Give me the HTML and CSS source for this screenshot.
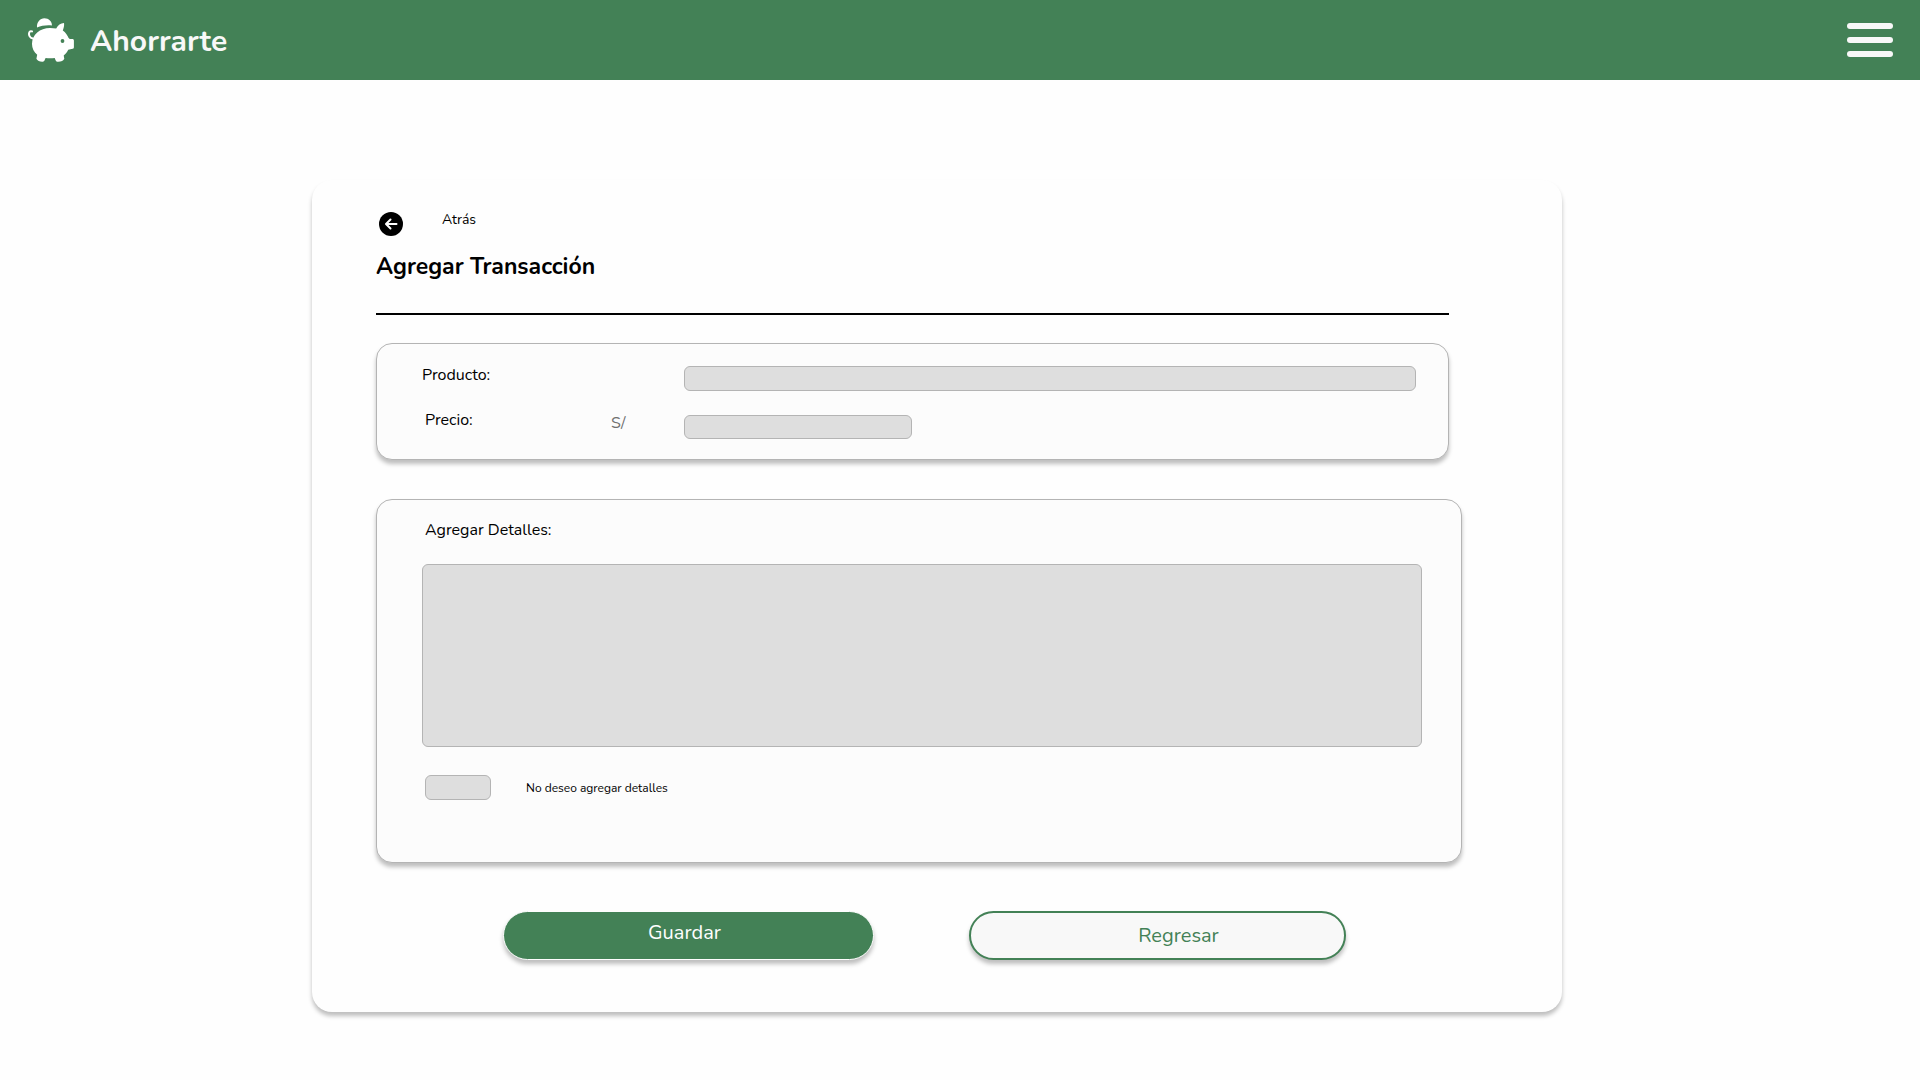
FILE: index.html
```html
<!DOCTYPE html>
<html lang="es">
<head>
<meta charset="utf-8">
<meta name="viewport" content="width=device-width, initial-scale=1">
<title>Ahorrarte - Agregar Transacción</title>
<link rel="stylesheet" href="styles.css">
</head>
<body>
<header class="topbar">
  <a class="brand" href="#">
    <svg class="brand-icon" viewBox="0 0 46 44" aria-hidden="true">
      <path class="solid" d="M9 9.500C8.600 4.400 12 .3 16.400 .3s7.800 3.500 7.500 7.200C18.500 6.900 13.500 7.700 9 9.500z"/>
      <path class="solid" d="M4 26C4 16.500 12 9.900 22 9.900c2.300 0 4.300.2 6.200.7C30 7 32.500 5.200 36 4.900c.4 2.800-.3 5.200-1.200 7.600 2.700 2 4.700 4.500 5.800 7.600l1.200.9h2.600c.9 0 1.500.6 1.500 1.500v6.700c0 .8-.5 1.400-1.300 1.600l-4.400.9c-1.100 2.300-2.600 4.200-4.500 5.700l.6 3.400c-.8 2.300-3.700 3.200-7 3-.9-.1-1.500-.7-1.900-2l-.7-1.900c-2.900.5-6.200.5-9.100 0l-.9 2.200c-.4 1-1 1.600-2.100 1.600-2.700.1-5.200-.8-6.200-3l.8-4C5.900 34 4 30.300 4 26z"/>
      <path class="tail" d="M4.800 20.500C1.500 20 .6 16.700 1.200 14.700 1.600 13.300 2.600 12.800 4 13.400"/>
      <circle class="eye" cx="34.500" cy="23" r="1.900"/>
    </svg>
    <span class="brand-name">Ahorrarte</span>
  </a>
  <button class="menu" type="button" aria-label="Menú">
    <span class="menu-bar"></span>
    <span class="menu-bar"></span>
    <span class="menu-bar"></span>
  </button>
</header>

<main class="page">
  <form class="card">
    <a class="back" href="#">
      <svg class="back-icon" viewBox="0 0 24 24" aria-hidden="true">
        <circle cx="12" cy="12" r="12"/>
        <path d="M17.500 12H7.500M11.500 7.500L7 12l4.500 4.500"/>
      </svg>
      <span class="back-text">Atrás</span>
    </a>
    <h1 class="title">Agregar Transacción</h1>
    <hr class="rule">

    <section class="panel product">
      <label class="label" for="producto">Producto:</label>
      <input class="field wide" id="producto" type="text">
      <label class="label inset" for="precio">Precio:</label>
      <span class="currency">S/</span>
      <input class="field price" id="precio" type="text">
    </section>

    <section class="panel details">
      <label class="label inset" for="detalles">Agregar Detalles:</label>
      <textarea class="field notes" id="detalles"></textarea>
      <div class="skip">
        <input class="field skip-box" id="sin-detalles" type="checkbox">
        <label class="small" for="sin-detalles">No deseo agregar detalles</label>
      </div>
    </section>

    <div class="actions">
      <button class="btn save" type="submit">Guardar</button>
      <button class="btn return" type="button">Regresar</button>
    </div>
  </form>
</main>
</body>
</html>
```
FILE: styles.css
```css
* {
  box-sizing: border-box;
}

body {
  margin: 0;
  background: #fefefe;
  color: #000;
  font-family: Nunito, Lato, sans-serif;
  font-size: 16px;
  line-height: 24px;
}

.topbar {
  display: flex;
  align-items: center;
  justify-content: space-between;
  height: 80px;
  padding: 0 27px 1px 28px;
  background: #438156;
}

.brand {
  display: flex;
  align-items: center;
  gap: 16px;
  color: #f8f8f8;
  text-decoration: none;
}

.brand-icon {
  width: 46px;
  height: 44px;
}

.solid {
  fill: #fff;
}

.tail {
  fill: none;
  stroke: #fff;
  stroke-width: 2;
  stroke-linecap: round;
}

.eye {
  fill: #438156;
}

.brand-name {
  padding-top: 4px;
  font-size: 30px;
  font-weight: 700;
  line-height: 40px;
}

.menu {
  display: flex;
  flex-direction: column;
  gap: 8px;
  width: 46px;
  padding: 0;
  border: 0;
  background: none;
}

.menu-bar {
  height: 6px;
  border-radius: 3px;
  background: #f8f8f8;
}

.page {
  padding: 100px 358px 64px 312px;
}

.card {
  padding: 28px 100px 52px 64px;
  border-radius: 20px;
  background: #fefefe;
  box-shadow: 0 4px 4px rgba(0, 0, 0, 0.25);
}

.back {
  display: flex;
  gap: 39px;
  padding: 4px 0 0 3px;
  color: #000;
  text-decoration: none;
}

.back-icon {
  width: 24px;
  height: 24px;
}

.back-icon path {
  fill: none;
  stroke: #fff;
  stroke-width: 2;
  stroke-linecap: round;
  stroke-linejoin: round;
}

.back-text {
  font-size: 14px;
  line-height: 16px;
}

.title {
  margin: 15px 0 0;
  font-size: 23px;
  font-weight: 700;
  line-height: 32px;
}

.rule {
  height: 2px;
  margin: 30px 13px 28px 0;
  border: 0;
  background: #000;
}

.panel {
  border: 1px solid #b4b4b4;
  border-radius: 16px;
  background: #fcfcfc;
  box-shadow: 0 4px 4px rgba(0, 0, 0, 0.25);
}

.product {
  display: grid;
  grid-template-columns: 189px 73px 1fr;
  grid-template-rows: 45px auto;
  align-items: start;
  margin-right: 13px;
  padding: 22px 32px 20px 45px;
}

.label {
  line-height: 18px;
}

.inset {
  padding-left: 3px;
}

.field {
  display: block;
  height: 25px;
  margin: 0;
  padding: 0 8px;
  border: 1px solid #b4b4b4;
  border-radius: 6px;
  background: #dedede;
  font: inherit;
  appearance: none;
}

.wide {
  grid-column: 3;
}

.currency {
  padding-top: 3px;
  color: #707070;
  line-height: 18px;
}

.price {
  width: 228px;
  height: 24px;
  margin-top: 4px;
}

.details {
  display: flex;
  flex-direction: column;
  margin-top: 39px;
  padding: 21px 39px 62px 45px;
}

.notes {
  width: 100%;
  height: 183px;
  margin-top: 25px;
  padding: 8px;
  resize: none;
}

.skip {
  display: flex;
  align-items: center;
  gap: 35px;
  margin-top: 28px;
  padding-left: 3px;
}

.skip-box {
  width: 66px;
}

.small {
  font-size: 12px;
}

.actions {
  display: grid;
  grid-template-columns: 371fr 377fr;
  gap: 95px;
  margin: 48px 116px 0 127px;
}

.btn {
  height: 49px;
  border-radius: 25px;
  font-family: inherit;
  font-size: 20px;
  line-height: 24px;
  box-shadow: 0 4px 4px rgba(0, 0, 0, 0.25);
}

.save {
  padding: 0 8px 6px 0;
  border: 1px solid #fefefe;
  background: #438156;
  color: #fefefe;
}

.return {
  padding: 0 0 0 42px;
  border: 2px solid #438156;
  background: #f8f8f8;
  color: #438156;
}
```
